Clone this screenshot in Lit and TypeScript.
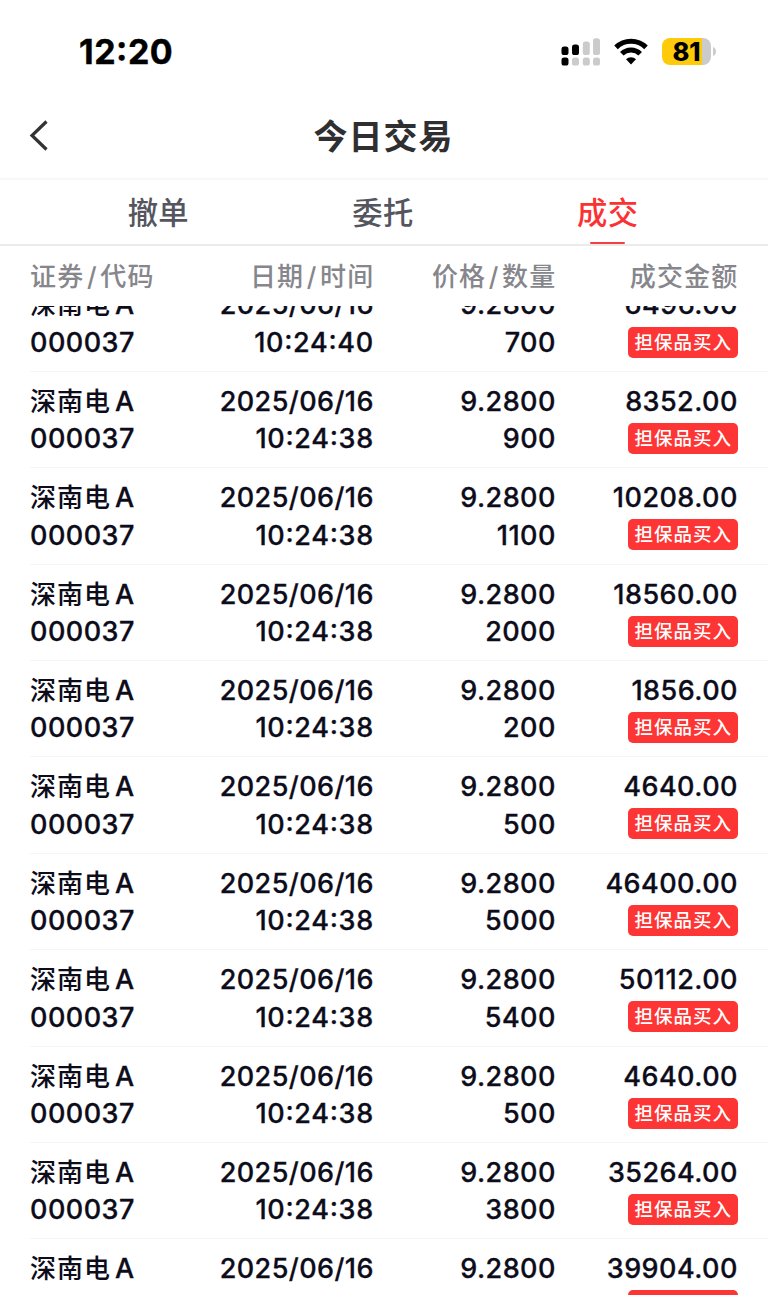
import { LitElement, html, css } from "lit";
import { customElement, property } from "lit/decorators.js";

interface Deal {
  time: string;
  qty: string;
  amount: string;
}

const DEALS: Deal[] = [
  { time: "10:24:40", qty: "700", amount: "6496.00" },
  { time: "10:24:38", qty: "900", amount: "8352.00" },
  { time: "10:24:38", qty: "1100", amount: "10208.00" },
  { time: "10:24:38", qty: "2000", amount: "18560.00" },
  { time: "10:24:38", qty: "200", amount: "1856.00" },
  { time: "10:24:38", qty: "500", amount: "4640.00" },
  { time: "10:24:38", qty: "5000", amount: "46400.00" },
  { time: "10:24:38", qty: "5400", amount: "50112.00" },
  { time: "10:24:38", qty: "500", amount: "4640.00" },
  { time: "10:24:38", qty: "3800", amount: "35264.00" },
  { time: "10:24:38", qty: "4300", amount: "39904.00" },
];

@customElement("status-bar")
class StatusBar extends LitElement {
  static styles = css`
    :host { display: flex; height: 92px; box-sizing: border-box; padding: 11px 52px 0 79px; align-items: center; justify-content: space-between; color: #000; }
    .clock { font-size: 34px; font-weight: 700; letter-spacing: 0.5px; line-height: 40px; font-feature-settings: "case"; -webkit-text-stroke: 0.4px #000; }
    .icons { display: flex; align-items: center; height: 28px; }
    .signal { margin-right: 14px; }
    .wifi { margin-right: 14px; }
    .battery { display: flex; align-items: center; gap: 2px; }
    .cell { width: 49px; height: 27px; border-radius: 8px; background: linear-gradient(90deg, #fecb0a 0 40px, #cbcbcb 40px); font-size: 25.5px; line-height: 27px; font-weight: 800; text-align: center; }
    svg { display: block; }
  `;
  render() {
    return html`
      <span class="clock">12:20</span>
      <div class="icons">
        <svg class="signal" width="39" height="28" viewBox="0 0 39 28">
          <g fill="#000">
            <rect x="0.5" y="8.5" width="7" height="8.5" rx="2.6" />
            <rect x="11" y="6.5" width="7" height="10.5" rx="2.6" />
            <rect x="0.5" y="19.5" width="7" height="8" rx="2.6" />
          </g>
          <g fill="#cbcbcb">
            <rect x="21.8" y="3.5" width="7" height="13.5" rx="2.6" />
            <rect x="32" y="0.3" width="7" height="16.7" rx="2.6" />
            <rect x="11" y="19.5" width="7" height="8" rx="2.6" />
            <rect x="21.8" y="19.5" width="7" height="8" rx="2.6" />
            <rect x="32" y="19.5" width="7" height="8" rx="2.6" />
          </g>
        </svg>
        <svg class="wifi" width="34" height="28" viewBox="0 0 34 28">
          <g fill="none" stroke="#000" stroke-width="5">
            <path d="M2 9.4 A21.4 21.4 0 0 1 32 9.4" />
            <path d="M7.8 15.8 A13 13 0 0 1 26.2 15.8" />
          </g>
          <path d="M17 26.4 L12 21.3 A7 7 0 0 1 22 21.3 Z" fill="#000" />
        </svg>
        <div class="battery">
          <div class="cell">81</div>
          <svg width="3" height="9" viewBox="0 0 3 9"><path d="M0 0 C4 1.6 4 7.4 0 9 Z" fill="#cbcbcb" /></svg>
        </div>
      </div>
    `;
  }
}

@customElement("deal-row")
class DealRow extends LitElement {
  @property({ attribute: false }) deal!: Deal;
  static styles = css`
    :host { display: grid; grid-template-columns: 120px 223.5px 182px 182px; flex: none; height: 96.4px; box-sizing: border-box; margin-left: 30px; padding-top: 11px; border-bottom: 1.5px solid #f5f5f5; align-content: start; color: #0d0c1a; font-size: 27px; line-height: 37.5px; letter-spacing: 0.45px; font-weight: 500; white-space: nowrap; -webkit-text-stroke: 0.3px currentColor; }
    .col { display: flex; flex-direction: column; align-items: flex-end; }
    .col > span { margin-right: -0.4px; }
    .first { align-items: flex-start; }
    .stock { display: flex; gap: 4px; }
    .cjk { font-size: 26px; letter-spacing: 1px; -webkit-text-stroke: 0; }
    .date { letter-spacing: 0.42px; }
    .time { font-feature-settings: "case"; letter-spacing: 0.7px; }
    .tag { box-sizing: border-box; width: 110px; height: 31px; margin: 2.6px -0.8px 0 0; border-radius: 5px; background: #fd3535; color: #fff; font-size: 18.5px; line-height: 31px; letter-spacing: 1px; font-weight: 500; text-align: center; -webkit-text-stroke: 0; }
  `;
  render() {
    const d = this.deal;
    return html`
      <div class="col first"><span class="stock"><span class="cjk">深南电</span>A</span><span>000037</span></div>
      <div class="col"><span class="date">2025/06/16</span><span class="time">${d.time}</span></div>
      <div class="col"><span>9.2800</span><span>${d.qty}</span></div>
      <div class="col"><span>${d.amount}</span><div class="tag">担保品买入</div></div>
    `;
  }
}

@customElement("app-root")
class AppRoot extends LitElement {
  static styles = css`
    :host { display: flex; flex-direction: column; width: 768px; height: 1296px; overflow: hidden; background: #fff; font-family: Inter, "Noto Sans CJK SC", sans-serif; }
    .title { display: grid; grid-template-columns: 60px 1fr 60px; align-items: center; height: 88px; box-sizing: border-box; border-bottom: 2px solid #f8f8f8; color: #2f2f31; font-size: 34px; font-weight: 700; letter-spacing: 1px; text-align: center; }
    .name { margin: -2px 1px 0 0; }
    .back { display: block; margin-left: 28px; }
    .tabs { display: flex; height: 66px; box-sizing: border-box; padding: 0 48px 0 46px; border-bottom: 2px solid #ebebec; color: #55555f; font-size: 30.3px; letter-spacing: 0.4px; font-weight: 500; }
    .tab { flex: 1; display: flex; flex-direction: column; align-items: center; line-height: 66px; height: 64px; }
    .active { color: #fb3234; }
    .bar { width: 35px; height: 2.5px; margin-top: -4.5px; border-radius: 1px; background: #fb3c3e; flex: none; }
    .heads { display: grid; grid-template-columns: 160px 183.5px 182px 182px; height: 60px; padding-left: 30px; color: #86868c; font-size: 26px; letter-spacing: 1.2px; line-height: 59px; padding-top: 1px; box-sizing: border-box; font-weight: 500; white-space: nowrap; text-align: right; }
    .head { margin-right: -1px; }
    .head:first-child { text-align: left; }
    .slash { margin: 0 2.5px; }
    .list { flex: 1; min-height: 0; overflow: hidden; display: flex; flex-direction: column; margin-bottom: 1px; }
    .scrolled { display: flex; flex-direction: column; margin-top: -30.6px; }
  `;
  head(a: string, b: string) {
    return html`<span class="head">${a}<span class="slash">/</span>${b}</span>`;
  }
  render() {
    return html`
      <status-bar></status-bar>
      <div class="title">
        <svg class="back" width="22" height="32" viewBox="0 0 22 32"><path d="M18.5 2.5 L4 16.5 L18.5 30.5" fill="none" stroke="#333" stroke-width="3.2" /></svg>
        <span class="name">今日交易</span>
      </div>
      <div class="tabs">
        <div class="tab">撤单</div>
        <div class="tab">委托</div>
        <div class="tab active">成交<div class="bar"></div></div>
      </div>
      <div class="heads">
        ${this.head("证券", "代码")}${this.head("日期", "时间")}${this.head("价格", "数量")}
        <span class="head">成交金额</span>
      </div>
      <div class="list"><div class="scrolled">${DEALS.map((d) => html`<deal-row .deal=${d}></deal-row>`)}</div></div>
    `;
  }
}
